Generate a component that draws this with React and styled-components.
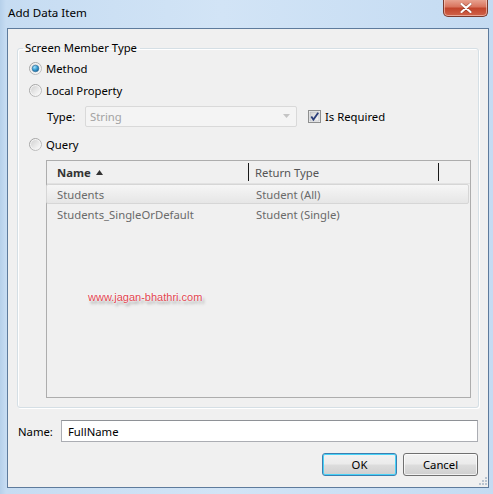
import React from "react";
import styled, { createGlobalStyle } from "styled-components";

const Global = createGlobalStyle`
  html, body { margin: 0; padding: 0; }
  body { background: #bfd7ef; font-family: "Noto Sans", "Open Sans", sans-serif; font-size: 11.3px; }
  * { box-sizing: border-box; }
`;

const Window = styled.div`
  width: 493px;
  height: 494px;
  display: flex;
  flex-direction: column;
  background: linear-gradient(to right, #b6d0ea 0px, #c6dcf2 6px, #d2e4f6 45%, #c4dbf2 100%);
  position: relative;
  overflow: hidden;
`;

const TitleBar = styled.div`
  height: 28px;
  flex: none;
  display: flex;
  align-items: center;
  padding: 0 0 2px 8px;
  position: relative;
`;

const Title = styled.span`
  color: #000;
  font-size: 11.6px;
  line-height: 16px;
`;

const CloseButton = styled.div`
  position: absolute;
  top: -1px;
  left: 443px;
  width: 45px;
  height: 18px;
  border: 1px solid #7a3a2e;
  border-top: none;
  border-radius: 0 0 5px 5px;
  background: linear-gradient(#eaa896 0%, #d9755f 45%, #c2452c 55%, #d0634a 100%);
  box-shadow: inset 0 0 0 1px rgba(255, 220, 210, 0.55);
  display: flex;
  align-items: center;
  justify-content: center;
`;

const Client = styled.div`
  flex: 1;
  margin: 0 4px 6px 7px;
  border: 1px solid #5e7b9c;
  background: #f0f0f0;
  padding: 11px 9px 0 9px;
  display: flex;
  flex-direction: column;
  position: relative;
`;

const Group = styled.fieldset`
  margin: 0;
  padding: 0;
  border: 1px solid #d5dfe5;
  border-radius: 3px;
  box-shadow: inset 1px 1px 0 #fff, 1px 1px 0 #fff;
  height: 368px;
  min-width: 0;
`;

const Legend = styled.legend`
  margin-left: 5px;
  padding: 0 3px 0 2px;
  color: #000;
  line-height: 16px;
`;

const GroupBody = styled.div`
  display: flex;
  flex-direction: column;
  padding: 2px 7px 0 11px;
`;

const OptionRow = styled.label`
  display: flex;
  align-items: center;
  height: ${(p) => p.$h || 22}px;
  margin-top: ${(p) => p.$mt || 0}px;
  gap: 4px;
  color: #000;
`;

const TypeRow = styled.div`
  display: flex;
  align-items: center;
  height: 24px;
  margin-top: 3px;
  padding-left: 18px;
`;

const TypeLabel = styled.span`
  width: 38px;
  color: #000;
`;

const Combo = styled.div`
  width: 212px;
  height: 21px;
  border: 1px solid #d9d9d9;
  border-radius: 2px;
  background: #f4f4f4;
  display: flex;
  align-items: center;
  justify-content: space-between;
  padding: 0 6px 0 4px;
  color: #a3a3a3;
`;

const CheckWrap = styled.label`
  display: flex;
  align-items: center;
  gap: 4px;
  margin-left: 11px;
  color: #000;
`;

const List = styled.div`
  margin: 4px 0 0 17px;
  height: 238px;
  border: 1px solid #adadad;
  background: #f0f0f0;
  display: flex;
  flex-direction: column;
  position: relative;
`;

const Header = styled.div`
  display: grid;
  grid-template-columns: 202px 190px 1fr;
  height: 23px;
  border-bottom: 1px solid #e2e2e2;
`;

const HeadCell = styled.div`
  display: flex;
  align-items: center;
  gap: 5px;
  padding-left: ${(p) => p.$pl || 10}px;
  color: ${(p) => (p.$bold ? "#333" : "#555")};
  font-weight: ${(p) => (p.$bold ? 700 : 400)};
  border-right: ${(p) => (p.$sep ? "1px solid #1a1a1a" : "none")};
  margin: 2px 0;
`;

const Row = styled.div`
  display: grid;
  grid-template-columns: 202px 1fr;
  height: 20px;
  margin: 0 1px 0 -1px;
  align-items: center;
  color: #6a6a6a;
  border: 1px solid ${(p) => (p.$sel ? "#d6d6d6" : "transparent")};
  border-radius: 2px;
  background: ${(p) => (p.$sel ? "linear-gradient(#f6f6f6, #e6e6e6)" : "transparent")};
`;

const Cell = styled.div`
  padding-left: ${(p) => p.$pl || 10}px;
  white-space: nowrap;
`;

const Watermark = styled.div`
  position: absolute;
  left: 41px;
  top: 130px;
  font-family: "Liberation Sans", Arial, sans-serif;
  font-size: 11px;
  color: #e0454f;
  text-shadow: 0 0 1px #fff, 0 0 2px #fff, 0 0 3px #fff, 2px 3px 3px rgba(0, 0, 0, 0.35);
`;

const NameRow = styled.div`
  display: flex;
  align-items: center;
  margin-top: 12px;
  height: 22px;
  padding-left: 1px;
`;

const NameLabel = styled.span`
  width: 43px;
  color: #000;
`;

const TextBox = styled.div`
  flex: 1;
  margin-right: 1px;
  height: 22px;
  border: 1px solid #abadb3;
  border-top-color: #8e9196;
  background: #fff;
  display: flex;
  align-items: center;
  padding-left: 6px;
  color: #000;
`;

const Buttons = styled.div`
  display: flex;
  justify-content: flex-end;
  gap: 6px;
  margin-top: 11px;
  padding-right: 1px;
`;

const Button = styled.div`
  width: 75px;
  height: 23px;
  border: 1px solid ${(p) => (p.$default ? "#3c7fb1" : "#707070")};
  border-radius: 3px;
  background: linear-gradient(#f2f2f2 0%, #ebebeb 48%, #dddddd 52%, #cfcfcf 100%);
  box-shadow: inset 0 0 0 1px ${(p) => (p.$default ? "#48d2f7" : "rgba(255,255,255,0.7)")};
  display: flex;
  align-items: center;
  justify-content: center;
  color: #000;
`;

const Grip = styled.svg`
  position: absolute;
  right: 1px;
  bottom: 1px;
`;

const Radio = ({ checked }) => (
  <svg width="13" height="13" viewBox="0 0 13 13">
    <defs>
      <linearGradient id="rb" x1="0" y1="0" x2="1" y2="1">
        <stop offset="0" stopColor="#9a9a9a" />
        <stop offset="1" stopColor="#c8c8c8" />
      </linearGradient>
      <linearGradient id="rf" x1="0" y1="0" x2="1" y2="1">
        <stop offset="0" stopColor="#d2d2d2" />
        <stop offset="1" stopColor="#fbfbfb" />
      </linearGradient>
      <radialGradient id="rd" cx="0.35" cy="0.3" r="0.8">
        <stop offset="0" stopColor="#a8e2fb" />
        <stop offset="0.5" stopColor="#3a9fd4" />
        <stop offset="1" stopColor="#155b8c" />
      </radialGradient>
    </defs>
    <circle cx="6.5" cy="6.5" r="6" fill="#f4f4f4" stroke="url(#rb)" />
    <circle cx="6.5" cy="6.5" r="4.5" fill="url(#rf)" />
    {checked && <circle cx="6.5" cy="6.5" r="3.3" fill="url(#rd)" stroke="#2c6c98" strokeWidth="0.6" />}
  </svg>
);

const CheckBox = () => (
  <svg width="13" height="13" viewBox="0 0 13 13">
    <defs>
      <linearGradient id="cbf" x1="0" y1="0" x2="1" y2="1">
        <stop offset="0" stopColor="#cfcfcf" />
        <stop offset="1" stopColor="#fafafa" />
      </linearGradient>
    </defs>
    <rect x="0.5" y="0.5" width="12" height="12" fill="#f4f4f4" stroke="#8e8f8f" />
    <rect x="2" y="2" width="9" height="9" fill="url(#cbf)" stroke="#aeb3b9" strokeWidth="0.6" />
    <path d="M3.3 6.6 L5.4 9.6 L10.2 2.8" fill="none" stroke="#2b3e7a" strokeWidth="1.8" />
  </svg>
);

const gripDots = [[8, 0], [8, 3], [8, 6], [5, 3], [5, 6], [2, 6]];

export default function App() {
  return (
    <>
      <Global />
      <Window>
        <TitleBar>
          <Title>Add Data Item</Title>
          <CloseButton>
            <svg width="12" height="10" viewBox="0 0 12 10">
              <path d="M1.5 1 L10.5 9 M10.5 1 L1.5 9" stroke="#5a2318" strokeWidth="3.4" strokeLinecap="round" opacity="0.4" />
              <path d="M1.5 1 L10.5 9 M10.5 1 L1.5 9" stroke="#fff" strokeWidth="2.2" strokeLinecap="round" />
            </svg>
          </CloseButton>
        </TitleBar>
        <Client>
          <Group>
            <Legend>Screen Member Type</Legend>
            <GroupBody>
              <OptionRow $h={21}>
                <Radio checked />
                Method
              </OptionRow>
              <OptionRow>
                <Radio />
                Local Property
              </OptionRow>
              <TypeRow>
                <TypeLabel>Type:</TypeLabel>
                <Combo>
                  String
                  <svg width="7" height="4" viewBox="0 0 7 4">
                    <path d="M0 0 L7 0 L3.5 4 Z" fill="#c4c4c4" />
                  </svg>
                </Combo>
                <CheckWrap>
                  <CheckBox />
                  Is Required
                </CheckWrap>
              </TypeRow>
              <OptionRow $mt={4} $h={24}>
                <Radio />
                Query
              </OptionRow>
              <List>
                <Header>
                  <HeadCell $bold $sep>
                    Name
                    <svg width="7" height="5" viewBox="0 0 7 5">
                      <path d="M0 5 L3.5 0 L7 5 Z" fill="#333" />
                    </svg>
                  </HeadCell>
                  <HeadCell $sep $pl={6}>Return Type</HeadCell>
                  <HeadCell />
                </Header>
                <Row $sel>
                  <Cell>Students</Cell>
                  <Cell $pl={7}>Student (All)</Cell>
                </Row>
                <Row>
                  <Cell>Students_SingleOrDefault</Cell>
                  <Cell $pl={7}>Student (Single)</Cell>
                </Row>
                <Watermark>www.jagan-bhathri.com</Watermark>
              </List>
            </GroupBody>
          </Group>
          <NameRow>
            <NameLabel>Name:</NameLabel>
            <TextBox>FullName</TextBox>
          </NameRow>
          <Buttons>
            <Button $default>OK</Button>
            <Button>Cancel</Button>
          </Buttons>
          <Grip width="10" height="10" viewBox="0 0 10 10">
            {gripDots.map(([x, y], i) => (
              <rect key={i} x={x} y={y + 1} width="2" height="2" fill="#b9c4d0" />
            ))}
          </Grip>
        </Client>
      </Window>
    </>
  );
}
